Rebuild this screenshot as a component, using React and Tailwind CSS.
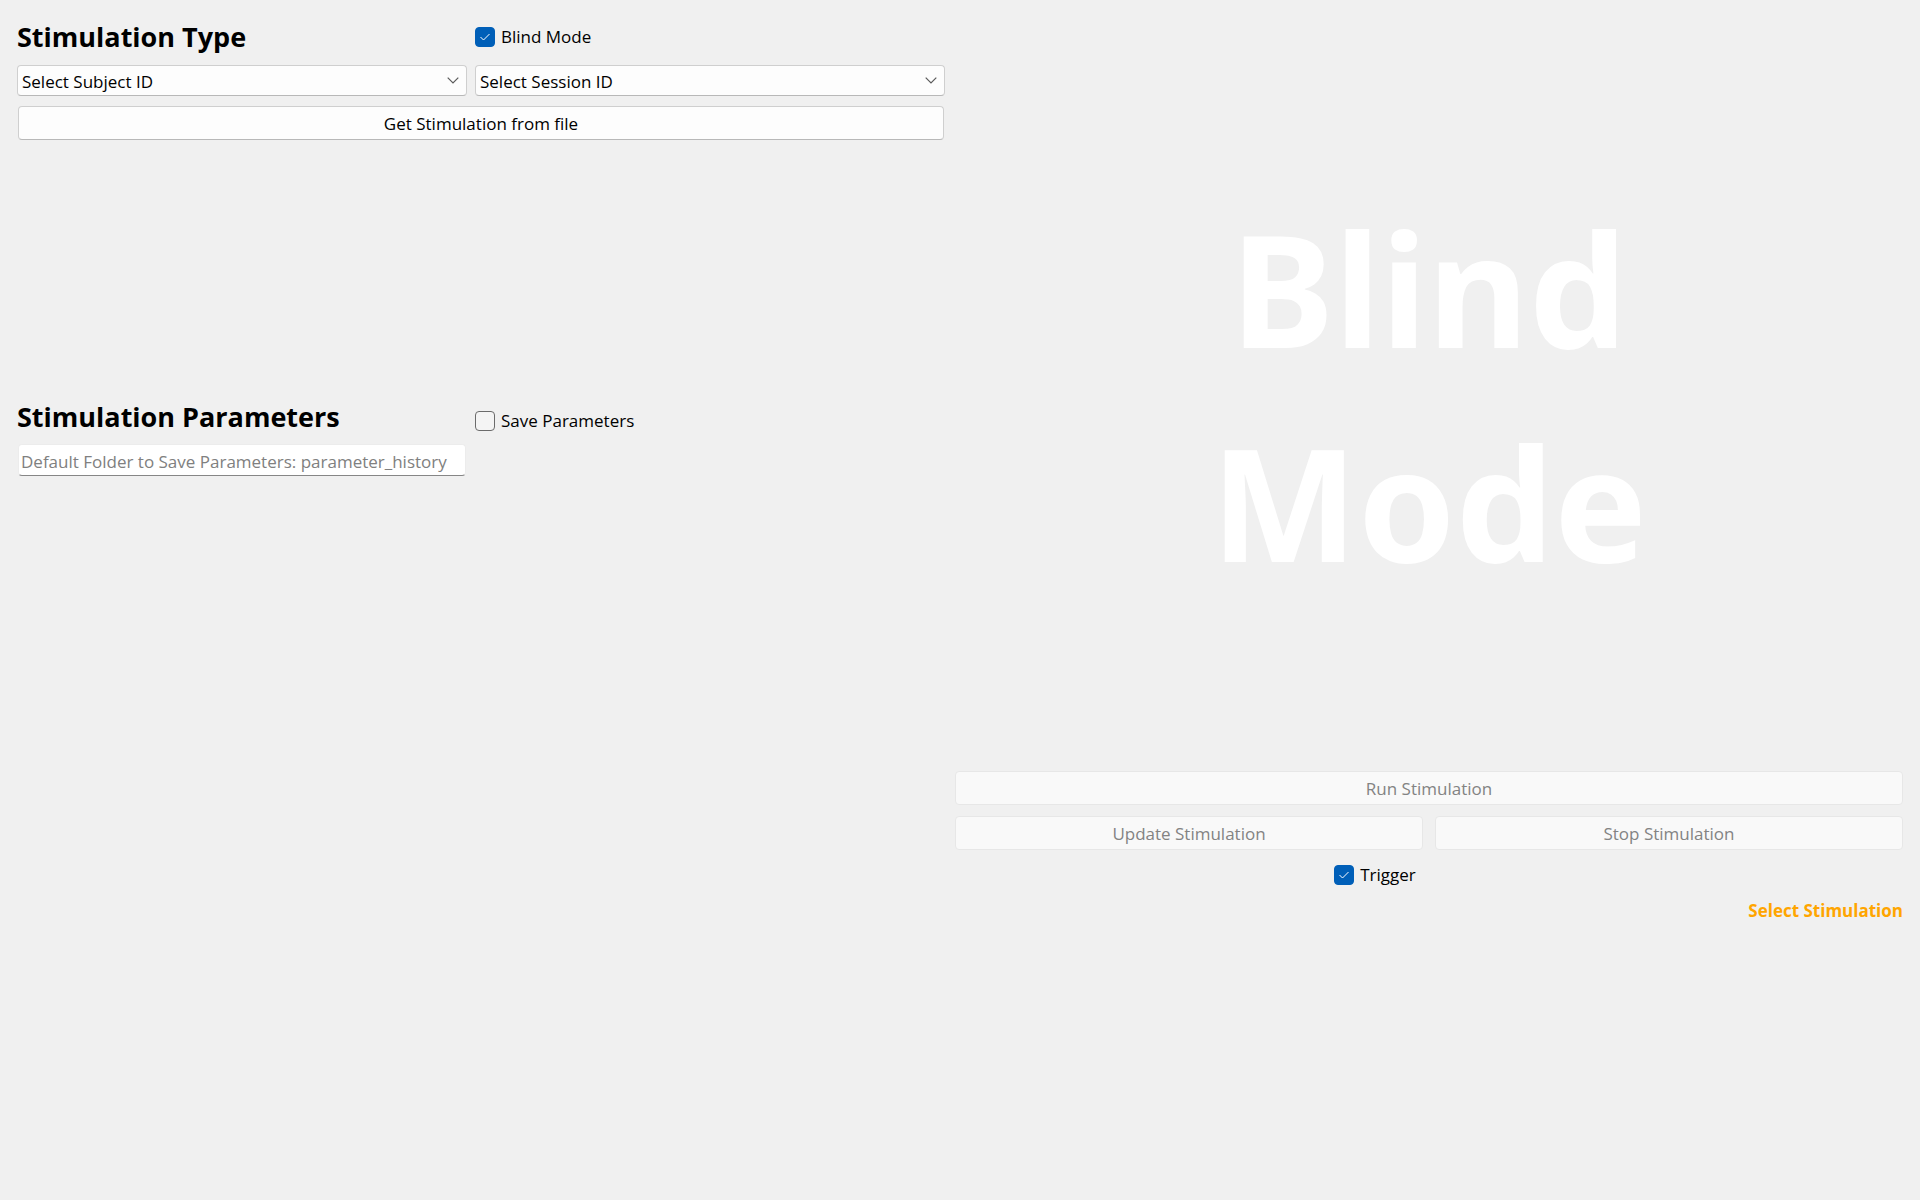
import { useState } from "react";

function CheckBox({ id, label, defaultChecked = false }) {
  return (
    <label htmlFor={id} className="flex items-center gap-1.5 text-[17px] leading-6">
      <span className="grid size-5 place-items-center">
        <input
          id={id}
          type="checkbox"
          defaultChecked={defaultChecked}
          className="peer col-start-1 row-start-1 size-full appearance-none rounded border border-[#6b6b6b] bg-[#f4f4f4] checked:border-[#005fb8] checked:bg-[#005fb8]"
        />
        <svg
          viewBox="0 0 10 8"
          className="pointer-events-none invisible col-start-1 row-start-1 h-2 w-2.5 peer-checked:visible"
          fill="none"
          stroke="white"
          strokeWidth="1"
        >
          <path d="M0.5 4 L3.5 7 L9.5 1" />
        </svg>
      </span>
      <span className="pt-px">{label}</span>
    </label>
  );
}

function ComboBox({ label }) {
  return (
    <div className="grid items-center">
      <select
        aria-label={label}
        className="col-start-1 row-start-1 h-[31px] w-full appearance-none rounded-sm border border-[#cfcfcf] border-b-[#b8b8b8] bg-[#fdfdfd] pt-0.5 pl-1 pr-8 text-[17px] leading-6"
      >
        <option>{label}</option>
      </select>
      <svg
        viewBox="0 0 12 7"
        className="pointer-events-none col-start-1 row-start-1 mr-2 h-[7px] w-3 justify-self-end"
        fill="none"
        stroke="#5a5a5a"
        strokeWidth="1.2"
      >
        <path d="M0.7 0.7 L6 6 L11.3 0.7" />
      </svg>
    </div>
  );
}

function PushButton({ children, disabled = false }) {
  return (
    <button
      type="button"
      disabled={disabled}
      className="h-[34px] w-full rounded border border-[#cfcfcf] border-b-[#b8b8b8] bg-[#fdfdfd] pt-px text-[17px] leading-6 disabled:border-[#e7e7e7] disabled:bg-[#f9f9f9] disabled:text-[#838383]"
    >
      {children}
    </button>
  );
}

export default function App() {
  const [folder, setFolder] = useState("");
  return (
    <main className="grid min-h-screen grid-cols-[928fr_948fr] items-start gap-x-2.5 bg-[#f0f0f0] px-[17px] font-['Open_Sans','Noto_Sans',sans-serif] text-black">
      <div>
        <section className="grid grid-cols-[450fr_470fr] gap-x-2 pt-4">
          <h1 className="h-[49px] text-[27px] leading-[42px] font-bold">Stimulation Type</h1>
          <div className="pt-2">
            <CheckBox id="blind" label="Blind Mode" defaultChecked />
          </div>
          <ComboBox label="Select Subject ID" />
          <ComboBox label="Select Session ID" />
          <div className="col-span-2 px-px pt-2.5">
            <PushButton>Get Stimulation from file</PushButton>
          </div>
        </section>
        <section className="mt-64 grid grid-cols-[450fr_470fr] gap-x-2">
          <h2 className="h-12 text-[27px] leading-[42px] font-bold">Stimulation Parameters</h2>
          <div className="pt-3">
            <CheckBox id="save" label="Save Parameters" />
          </div>
          <input
            type="text"
            aria-label="Folder to save parameters"
            value={folder}
            onChange={(e) => setFolder(e.target.value)}
            placeholder="Default Folder to Save Parameters: parameter_history"
            className="mx-px h-8 rounded-sm border border-[#ececec] border-b-[#868686] bg-white px-0.5 pt-0.5 text-[17px] leading-6 placeholder:text-[#808080]"
          />
        </section>
      </div>

      <div>
        <p className="pt-[181px] pb-[162px] text-center font-['Noto_Sans','Open_Sans',sans-serif] text-[156px] leading-[214px] font-bold text-white">
          Blind
          <br />
          Mode
        </p>
        <div className="grid grid-cols-2 gap-x-3 gap-y-[11px]">
          <div className="col-span-2">
            <PushButton disabled>Run Stimulation</PushButton>
          </div>
          <PushButton disabled>Update Stimulation</PushButton>
          <PushButton disabled>Stop Stimulation</PushButton>
        </div>
        <div className="pt-3 pl-[40%]">
          <CheckBox id="trigger" label="Trigger" defaultChecked />
        </div>
        <p className="pt-3 text-right text-[17px] leading-6 font-bold text-[#ffa500]">
          Select Stimulation
        </p>
      </div>
    </main>
  );
}
